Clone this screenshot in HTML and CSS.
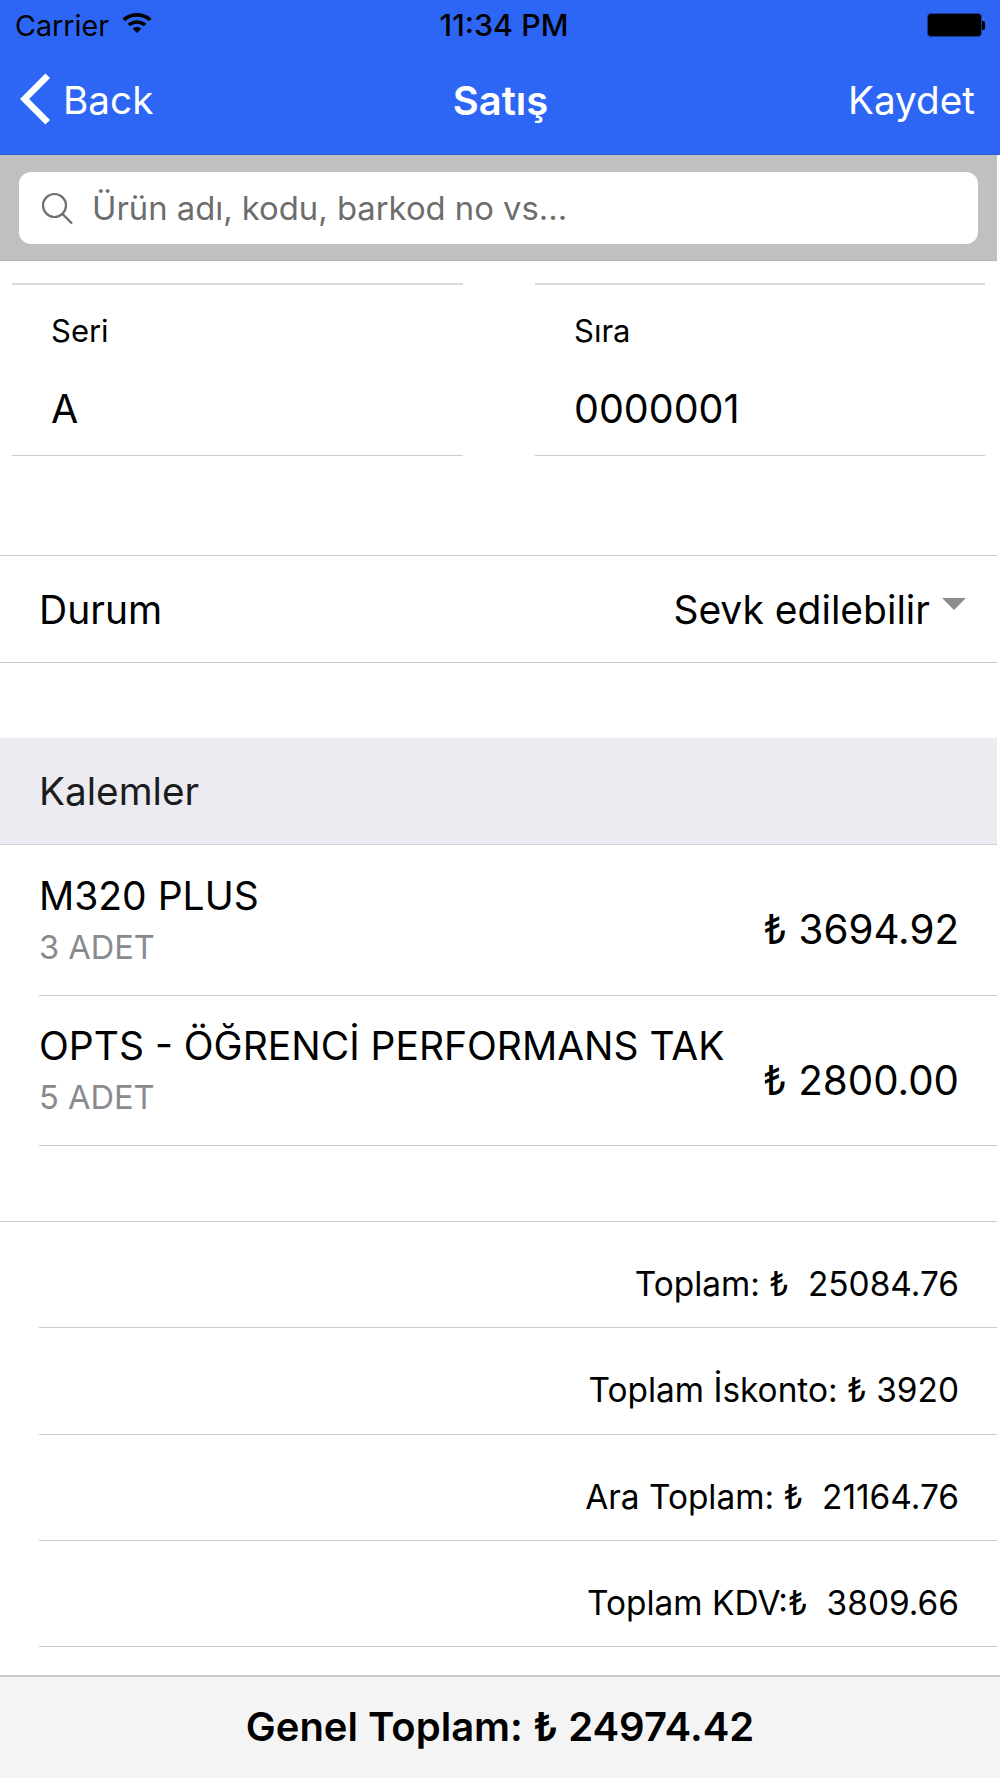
FILE: index.html
```html
<!DOCTYPE HTML>
<html>
	<head>
		<title>Satış</title>
		<meta charset="utf-8">
		<link rel="stylesheet" href="styles.css">
	</head>
	<body>
		<div class="page">
			<div class="topbar">
				<div class="status">
					<div class="status-left">
						<span>Carrier</span>
						<svg class="wifi" width="30" height="22" viewBox="0 0 30 22">
							<path d="M0.5 7.6C8.5 0.2 21.5 0.2 29.5 7.6L27 10.2C20.5 4.4 9.5 4.4 3 10.2Z"/>
							<path d="M5.6 12.8C10.8 8 19.2 8 24.4 12.8L21.9 15.3C18 11.8 12 11.8 8.1 15.3Z"/>
							<path d="M10.6 17.6C13 15.4 17 15.4 19.4 17.6L15 22Z"/>
						</svg>
					</div>
					<div class="time">11:34 PM</div>
					<div class="status-right">
						<div class="battery"></div>
						<div class="battery-nub"></div>
					</div>
				</div>
				<div class="nav">
					<div class="nav-back">
						<svg class="chevron" width="32" height="52" viewBox="0 0 32 52">
							<path d="M29.7 2.8L6.6 26L29.7 49.2" fill="none" stroke="#fff" stroke-width="6.5"/>
						</svg>
						<span>Back</span>
					</div>
					<div class="nav-title">Satış</div>
					<div class="nav-save">Kaydet</div>
				</div>
			</div>

			<div class="content">
				<div class="searchbar">
					<div class="searchbox">
						<svg class="search-icon" width="32" height="33" viewBox="0 0 32 33">
							<circle cx="13.5" cy="13.5" r="11.5" fill="none" stroke="#6f6f6f" stroke-width="2.2"/>
							<path d="M21.5 22L31 31.5" fill="none" stroke="#6f6f6f" stroke-width="2.4"/>
						</svg>
						<span>Ürün adı, kodu, barkod no vs...</span>
					</div>
				</div>

				<div class="fields">
					<div class="field">
						<div class="field-label">Seri</div>
						<div class="field-value">A</div>
					</div>
					<div class="field">
						<div class="field-label">Sıra</div>
						<div class="field-value">0000001</div>
					</div>
				</div>

				<div class="status-row">
					<span>Durum</span>
					<div class="picker">
						<span>Sevk edilebilir</span>
						<div class="caret"></div>
					</div>
				</div>

				<div class="section-head">Kalemler</div>

				<div class="item">
					<div>
						<div class="item-name">M320 PLUS</div>
						<div class="item-qty">3 ADET</div>
					</div>
					<div class="item-price">₺ 3694.92</div>
				</div>
				<div class="item">
					<div>
						<div class="item-name">OPTS - ÖĞRENCİ PERFORMANS TAK</div>
						<div class="item-qty">5 ADET</div>
					</div>
					<div class="item-price">₺ 2800.00</div>
				</div>

				<div class="totals">
					<div class="total-row">Toplam: ₺&nbsp; 25084.76</div>
					<div class="total-row">Toplam İskonto: ₺ 3920</div>
					<div class="total-row">Ara Toplam: ₺&nbsp; 21164.76</div>
					<div class="total-row">Toplam KDV:₺&nbsp; 3809.66</div>
				</div>
			</div>

			<div class="footer">Genel Toplam: ₺ 24974.42</div>
		</div>
	</body>
</html>
```

FILE: styles.css
```css
* {
	box-sizing: border-box;
}
body {
	margin: 0;
	background-color: white;
	font-family: "Inter", "Liberation Sans", sans-serif;
	color: black;
}
.page {
	display: flex;
	flex-direction: column;
	height: 1778px;
	overflow: hidden;
}

/* top bar */
.topbar {
	height: 155px;
	background-color: #2d66f5;
	border-bottom: 1px solid #2a5bd6;
}
.status {
	display: grid;
	grid-template-columns: 1fr auto 1fr;
	align-items: center;
	height: 50px;
	padding: 0 15px 0 15px;
	font-size: 28.7px;
}
.status-left {
	display: flex;
	align-items: center;
	gap: 13px;
}
.wifi {
	margin-top: -6px;
}
.time {
	margin-left: 8px;
	font-size: 30.4px;
	font-weight: 500;
}
.status-right {
	display: flex;
	justify-content: flex-end;
	align-items: center;
}
.battery {
	width: 55px;
	height: 24px;
	background-color: black;
	border: 1px solid #1d3d8f;
	border-radius: 4px;
}
.battery-nub {
	width: 3px;
	height: 9px;
	background-color: black;
	border-radius: 0 2px 2px 0;
}
.nav {
	display: grid;
	grid-template-columns: 1fr auto 1fr;
	align-items: center;
	height: 104px;
	padding: 0 25px 4px 18px;
	color: white;
	font-size: 38.7px;
}
.nav-back {
	display: flex;
	align-items: center;
	gap: 13px;
}
.chevron {
	margin-top: -3px;
}
.nav-title {
	margin-left: 8px;
	font-size: 40px;
	font-weight: 600;
}
.nav-save {
	text-align: right;
}

/* search */
.content {
	margin-right: 3px;
}
.searchbar {
	height: 106px;
	padding: 17px 19px 17px 19px;
	background-color: #c0c0c0;
	border-bottom: 1px solid #b4b4b4;
}
.searchbox {
	display: flex;
	align-items: center;
	gap: 19px;
	height: 72px;
	padding-left: 22px;
	background-color: white;
	border-radius: 12px;
	color: #6d6d6d;
	font-size: 32.8px;
}

/* seri / sira */
.fields {
	display: flex;
	gap: 72px;
	margin-top: 22px;
	padding-left: 12px;
}
.field {
	width: 451px;
	height: 173px;
	padding: 29px 0 0 39px;
	border-top: 2px solid #dcdcdc;
	border-bottom: 1px solid #cccccc;
}
.fields .field:last-child {
	width: 450px;
}
.field-label {
	font-size: 31px;
	line-height: 34px;
}
.field-value {
	margin-top: 38px;
	font-size: 39.5px;
	line-height: 46px;
}

/* durum */
.status-row {
	display: flex;
	justify-content: space-between;
	align-items: center;
	height: 108px;
	margin-top: 99px;
	padding: 0 31px 0 39px;
	border-top: 1px solid #cccccc;
	border-bottom: 1px solid #cccccc;
	font-size: 39px;
}
.picker {
	display: flex;
	align-items: center;
	gap: 12px;
}
.caret {
	width: 0;
	height: 0;
	margin-top: -10px;
	border-left: 12px solid transparent;
	border-right: 12px solid transparent;
	border-top: 12px solid #8c8c8c;
}

/* kalemler */
.section-head {
	display: flex;
	align-items: center;
	height: 107px;
	margin-top: 75px;
	padding-left: 39px;
	background-color: #ebebf1;
	border-bottom: 1px solid #cfcfd3;
	font-size: 38.7px;
	color: #1c1c1e;
}
.item {
	display: flex;
	justify-content: space-between;
	align-items: center;
	height: 150.5px;
	margin-left: 39px;
	padding: 0 38px 0 0;
	border-bottom: 1px solid #cccccc;
	white-space: nowrap;
}
.item-name {
	font-size: 39px;
	line-height: 46px;
}
.item-qty {
	margin-top: 8px;
	font-size: 32.6px;
	line-height: 40px;
	color: #8a8a8e;
}
.item-price {
	margin-top: 20px;
	font-size: 40.3px;
}

/* toplamlar */
.totals {
	margin-top: 75px;
	border-top: 1px solid #cccccc;
}
.total-row {
	height: 106.25px;
	margin-left: 39px;
	padding-right: 38px;
	line-height: 125px;
	text-align: right;
	font-size: 33.4px;
	border-bottom: 1px solid #cccccc;
}

.footer {
	display: flex;
	justify-content: center;
	align-items: center;
	height: 103px;
	margin-top: auto;
	padding-bottom: 2px;
	background-color: #f4f4f4;
	border-top: 2px solid #c8c8c8;
	font-size: 40px;
	font-weight: 600;
}
```
